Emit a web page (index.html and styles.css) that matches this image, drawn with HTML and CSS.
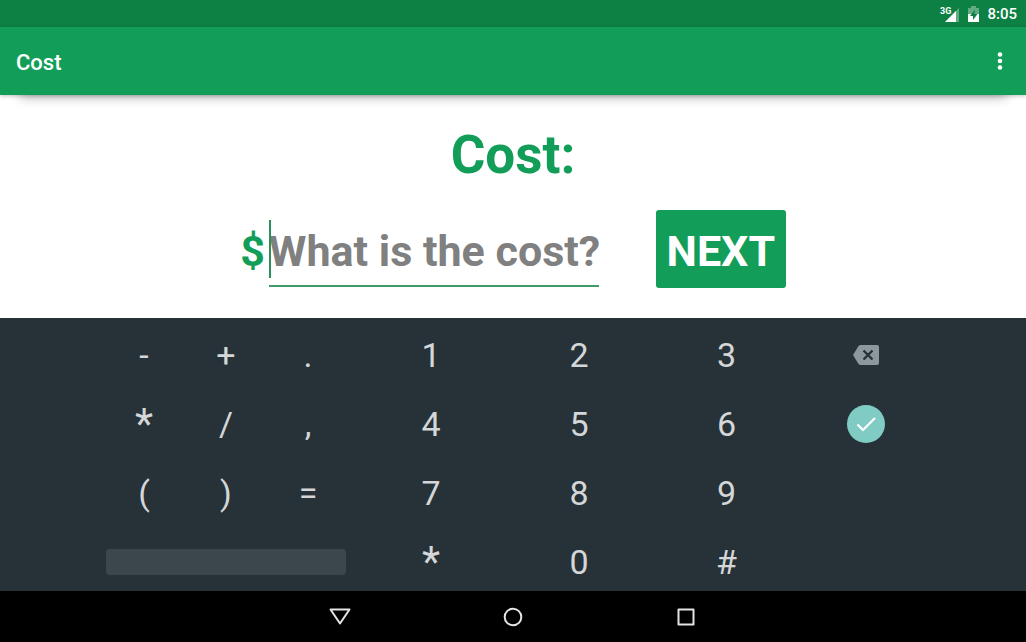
FILE: index.html
```html
<!DOCTYPE html>
<html lang="en">
<head>
<meta charset="utf-8">
<meta name="viewport" content="width=device-width, initial-scale=1">
<title>Cost</title>
<link rel="stylesheet" href="styles.css">
</head>
<body>
<div class="status">
  <svg class="signal" width="20" height="18" viewBox="0 0 20 18" aria-hidden="true">
    <path d="M19 3V17H5Z" fill="#fff" fill-opacity=".35"/>
    <path d="M16 6V17H5Z" fill="#fff"/>
    <text class="network" x="0" y="9">3G</text>
  </svg>
  <svg width="11" height="16" viewBox="0 0 11 16" aria-hidden="true">
    <path d="M0 2H3V0H8V2H11V8H0Z" fill="#fff" fill-opacity=".35"/>
    <path d="M0 8H11V16H0Z" fill="#fff"/>
    <path d="M7 3.500L2 10H5V14L9.500 8H6.500Z" fill="#0d8043"/>
  </svg>
  <time class="clock">8:05</time>
</div>
<header class="appbar">
  <h1 class="title">Cost</h1>
  <button class="more" type="button" aria-label="More options">
    <svg width="6" height="20" viewBox="0 0 6 20"><g fill="#fff"><circle cx="3" cy="3.500" r="2.300"/><circle cx="3" cy="10" r="2.300"/><circle cx="3" cy="16.500" r="2.300"/></g></svg>
  </button>
</header>
<main class="content">
  <h2 class="heading">Cost:</h2>
  <form class="entry">
    <label class="currency" for="cost">$</label>
    <div class="field">
      <input class="input" id="cost" type="text" placeholder="What is the cost?">
      <span class="caret"></span>
    </div>
    <button class="next" type="button">NEXT</button>
  </form>
</main>
<section class="keyboard" aria-label="Keyboard">
  <div class="keys">
    <button class="key">-</button><button class="key">+</button><button class="key">.</button>
    <button class="key digit">1</button><button class="key">2</button><button class="key">3</button>
    <button class="key icon" aria-label="Delete">
      <svg width="26" height="20" viewBox="0 0 26 20"><path d="M7.500 0H24Q26 0 26 2V18Q26 20 24 20H7.500Q6.300 20 5.500 19L0 10L5.500 1Q6.300 0 7.500 0Z" fill="#8e979b"/><path d="M10.500 5.500L19.500 14.500M19.500 5.500L10.500 14.500" stroke="#263238" stroke-width="2.400"/></svg>
    </button>
    <button class="key star">*</button><button class="key">/</button><button class="key">,</button>
    <button class="key digit">4</button><button class="key">5</button><button class="key">6</button>
    <button class="key icon" aria-label="Done">
      <svg width="38" height="38" viewBox="0 0 38 38"><circle cx="19" cy="19" r="19" fill="#80cbc4"/><path d="M10.500 19.500L16 25L28 13" fill="none" stroke="#fff" stroke-width="2.200"/></svg>
    </button>
    <button class="key">(</button><button class="key">)</button><button class="key">=</button>
    <button class="key digit">7</button><button class="key">8</button><button class="key">9</button>
    <button class="key space" aria-label="Space"><span class="bar"></span></button>
    <button class="key digit star">*</button><button class="key">0</button><button class="key">#</button>
  </div>
</section>
<nav class="navbar">
  <button class="nav" aria-label="Back"><svg width="22" height="20" viewBox="0 0 22 20"><path d="M1.500 2.500H20.500L11 16.500Z"/></svg></button>
  <button class="nav" aria-label="Home"><svg width="22" height="20" viewBox="0 0 22 20"><circle cx="11" cy="10" r="8.300"/></svg></button>
  <button class="nav" aria-label="Recent apps"><svg width="22" height="20" viewBox="0 0 22 20"><rect x="3.500" y="2.500" width="15" height="15"/></svg></button>
</nav>
</body>
</html>
```
FILE: styles.css
```css
* { box-sizing: border-box; }
body {
  margin: 0;
  min-height: 100vh;
  display: flex;
  flex-direction: column;
  background: #fff;
  font-family: Roboto, sans-serif;
}
button {
  border: 0;
  padding: 0;
  background: none;
  font-family: inherit;
}
svg { display: block; }
.status {
  height: 27px;
  display: flex;
  align-items: center;
  justify-content: flex-end;
  gap: 8px;
  padding: 0 9px;
  background: #0d8043;
  color: #fff;
}
.signal { overflow: visible; }
.network { font-size: 9px; font-weight: 700; fill: #fff; }
.clock { font-size: 15px; font-weight: 500; line-height: 28px; }
.appbar {
  height: 68px;
  display: flex;
  align-items: center;
  justify-content: space-between;
  padding: 0 16px;
  background: #129e59;
  box-shadow: 0 1px 4px rgba(0, 0, 0, .24), 0 22px 12px -20px rgba(0, 0, 0, .3);
}
.title {
  margin: 0;
  padding-top: 3px;
  color: #fff;
  font-size: 22px;
  font-weight: 500;
  line-height: 24px;
}
.more { padding: 0 7px; }
.content {
  flex: 1;
  display: flex;
  flex-direction: column;
  align-items: center;
  padding: 30px 16px;
}
.heading {
  margin: 0;
  color: #129e59;
  font-size: 53px;
  line-height: 60px;
}
.entry {
  display: flex;
  align-items: center;
  margin-top: 25px;
}
.currency {
  padding-top: 4px;
  color: #129e59;
  font-size: 43px;
  font-weight: 700;
  line-height: 58px;
  margin-right: 4px;
}
.field { position: relative; }
.input {
  display: block;
  width: 330px;
  height: 78px;
  padding: 3px 0 0;
  border: 0;
  border-radius: 0;
  outline: 0;
  background: linear-gradient(#429a6b, #429a6b) 0 75px / 100% 2px no-repeat;
  color: #129e59;
  font-family: inherit;
  font-size: 43px;
  font-weight: 700;
}
.input::placeholder { color: #808080; opacity: 1; }
.caret {
  position: absolute;
  left: 0;
  top: 10px;
  width: 2px;
  height: 58px;
  background: #2b8f5c;
}
.next {
  width: 130px;
  height: 78px;
  margin-left: 57px;
  padding-top: 4px;
  border-radius: 3px;
  background: #129e59;
  color: #fff;
  font-size: 43px;
  font-weight: 700;
}
.keyboard {
  padding: 3px 16px 0 24px;
  background: #263238;
}
.keys {
  display: grid;
  grid-template-columns: repeat(3, 82px) 156px 148px 147px 131px;
  grid-template-rows: repeat(3, 69px) 63px;
  justify-content: center;
  align-items: start;
}
.key {
  padding-top: 4px;
  color: #d4d6d7;
  font-size: 34px;
  line-height: 60px;
}
.digit { padding-left: 8px; }
.star { font-size: 42px; }
.icon {
  height: 67px;
  display: flex;
  align-items: center;
  justify-content: center;
  padding: 0;
}
.space { grid-column: span 3; padding: 21px 3px 0; }
.bar {
  display: block;
  height: 26px;
  border-radius: 4px;
  background: #3c474c;
}
.navbar {
  height: 51px;
  display: flex;
  justify-content: center;
  gap: 151px;
  background: #000;
}
.nav svg { fill: none; stroke: #e4e4e4; stroke-width: 2; stroke-linejoin: round; }
```
